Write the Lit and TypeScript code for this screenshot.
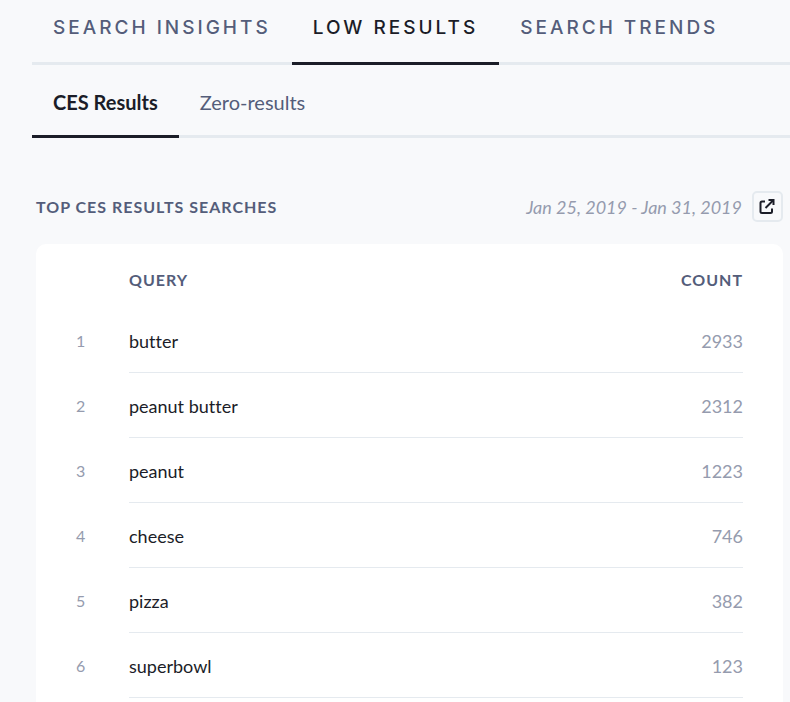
import { LitElement, html, css } from "lit";
import { customElement, state } from "lit/decorators.js";
import { classMap } from "lit/directives/class-map.js";

interface SearchRow {
  query: string;
  count: number;
}

@customElement("app-root")
export class AppRoot extends LitElement {
  static styles = css`
    :host {
      display: flex;
      flex-direction: column;
      box-sizing: border-box;
      min-height: 100vh;
      background: #f8f9fb;
      color: #1b1d28;
      font-family: Lato, "Liberation Sans", sans-serif;
      font-size: 18px;
      line-height: 24px;
      font-variant-ligatures: none;
    }
    .tabs {
      display: flex;
      margin-left: 32px;
      box-shadow: inset 0 -3px #e5eaef;
    }
    .tab {
      box-sizing: border-box;
      padding: 0 21px;
      border-bottom: 3px solid transparent;
      color: #545d7a;
      text-decoration: none;
      white-space: nowrap;
    }
    .tab.active {
      border-color: #1b1d28;
      color: #1b1d28;
    }
    .primary .tab {
      padding-top: 16px;
      padding-bottom: 22px;
      font-family: Inter, "Liberation Sans", sans-serif;
      font-weight: 500;
      font-size: 19px;
      letter-spacing: 3px;
    }
    .secondary .tab {
      padding-top: 25px;
      padding-bottom: 21px;
      font-size: 20px;
    }
    .secondary .active {
      font-weight: 700;
    }
    .report {
      display: flex;
      flex: 1;
      flex-direction: column;
      padding: 53px 7px 0 36px;
    }
    .heading {
      display: flex;
      align-items: center;
      margin-bottom: 22px;
    }
    h2 {
      margin: 0;
      flex: 1;
    }
    h2,
    th {
      color: #545d7a;
      font-weight: 700;
      font-size: 16px;
      letter-spacing: 1px;
    }
    .range {
      color: #959bae;
      font-style: italic;
    }
    .open {
      display: grid;
      place-items: center;
      box-sizing: border-box;
      width: 31px;
      height: 31px;
      margin-left: 10px;
      padding: 0;
      border: 2px solid #e5eaef;
      border-radius: 5px;
      background: #f8f9fb;
      color: #1b1d28;
    }
    .card {
      flex: 1;
      padding: 0 40px;
      border-radius: 10px 10px 0 0;
      background: #fff;
    }
    table {
      width: 100%;
      border-collapse: separate;
      border-spacing: 0;
      table-layout: fixed;
    }
    th,
    td {
      box-sizing: border-box;
      padding: 0;
      text-align: left;
    }
    thead th {
      height: 64px;
      padding-top: 8px;
    }
    tbody td {
      height: 65px;
      padding-top: 2px;
      border-bottom: 1px solid #e5eaef;
    }
    .rank {
      width: 53px;
    }
    tbody .rank {
      border-bottom-color: transparent;
      color: #959bae;
      font-size: 16px;
    }
    .count {
      width: 120px;
      text-align: right;
    }
    tbody .count {
      color: #959bae;
    }
  `;

  @state() private section = "Low Results";
  @state() private view = "CES Results";

  private rows: SearchRow[] = [
    { query: "butter", count: 2933 },
    { query: "peanut butter", count: 2312 },
    { query: "peanut", count: 1223 },
    { query: "cheese", count: 746 },
    { query: "pizza", count: 382 },
    { query: "superbowl", count: 123 },
  ];

  private tab(label: string, text: string, current: string, pick: (v: string) => void) {
    const active = label === current;
    return html`<a
      href="#"
      class=${classMap({ tab: true, active })}
      aria-current=${active ? "page" : "false"}
      @click=${(e: Event) => {
        e.preventDefault();
        pick(label);
      }}
      >${text}</a
    >`;
  }

  render() {
    return html`
      <nav class="tabs primary">
        ${["Search Insights", "Low Results", "Search Trends"].map((t) =>
          this.tab(t, t.toUpperCase(), this.section, (v) => (this.section = v))
        )}
      </nav>
      <nav class="tabs secondary">
        ${["CES Results", "Zero-results"].map((t) =>
          this.tab(t, t, this.view, (v) => (this.view = v))
        )}
      </nav>
      <main class="report">
        <div class="heading">
          <h2>TOP CES RESULTS SEARCHES</h2>
          <span class="range">Jan 25, 2019 - Jan 31, 2019</span>
          <button class="open" type="button" aria-label="Open report">
            <svg width="17" height="17" viewBox="0 0 17 17" fill="none" stroke="currentColor" stroke-width="2">
              <path d="M6 3.5H3Q1.5 3.5 1.5 5V13.5Q1.5 15 3 15H11.5Q13 15 13 13.5V10.5" />
              <path d="M6.5 10L14 2.5" />
              <path d="M9.5 2H14.5V7" />
            </svg>
          </button>
        </div>
        <section class="card">
          <table>
            <thead>
              <tr>
                <th class="rank"></th>
                <th scope="col">QUERY</th>
                <th class="count" scope="col">COUNT</th>
              </tr>
            </thead>
            <tbody>
              ${this.rows.map(
                (row, i) => html`<tr>
                  <td class="rank">${i + 1}</td>
                  <td>${row.query}</td>
                  <td class="count">${row.count}</td>
                </tr>`
              )}
            </tbody>
          </table>
        </section>
      </main>
    `;
  }
}
